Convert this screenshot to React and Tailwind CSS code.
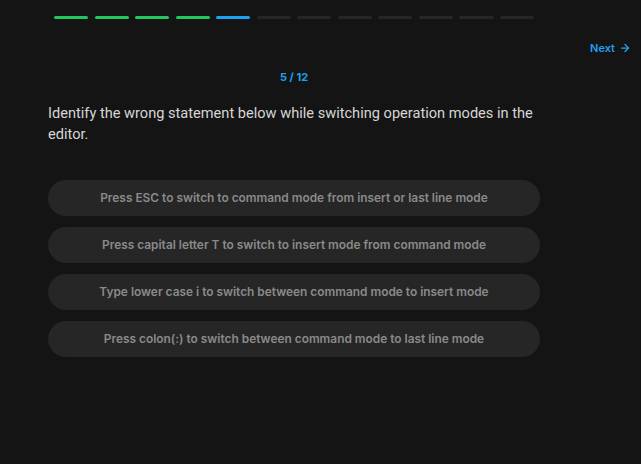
import { ArrowRight } from 'lucide-react'

const STEPS = 12
const CURRENT = 5

const OPTIONS = [
  'Press ESC to switch to command mode from insert or last line mode',
  'Press capital letter T to switch to insert mode from command mode',
  'Type lower case i to switch between command mode to insert mode',
  'Press colon(:) to switch between command mode to last line mode',
]

export default function App() {
  return (
    <div className="min-h-[464px] w-[641px] bg-[#141414] font-['Inter',sans-serif]">
      {/* progress */}
      <div className="flex gap-[6.5px] pl-[54px] pr-[107px] pt-4">
        {Array.from({ length: STEPS }).map((_, i) => (
          <div
            key={i}
            className={
              i < CURRENT - 1
                ? 'h-[3px] flex-1 rounded-full bg-[#22c55e]'
                : i === CURRENT - 1
                ? 'h-[3px] flex-1 rounded-full bg-[#1da1f2]'
                : 'h-[3px] flex-1 rounded-full bg-[#262626]'
            }
          />
        ))}
      </div>

      <div className="flex justify-end pr-[10px] pt-[21px]">
        <button className="flex items-center gap-1 text-[11px] font-semibold text-[#1da1f2]">
          Next <ArrowRight size={12} strokeWidth={2.5} />
        </button>
      </div>

      <div className="w-[492px] pl-12 box-content">
        <p className="mt-[12px] text-center text-[11px] font-bold text-[#1da1f2]">
          {CURRENT} / {STEPS}
        </p>

        <h1 className="mt-[18px] font-['Roboto',sans-serif] text-[14.6px] leading-[21px] text-[#d6d6d6]">
          Identify the wrong statement below while switching operation modes in the editor.
        </h1>

        <div className="mt-[35px] flex flex-col gap-[11px]">
          {OPTIONS.map(opt => (
            <button
              key={opt}
              className="h-[36px] w-full rounded-full bg-[#262626] text-center text-[11.9px] font-semibold text-[#8a8a8a]"
            >
              {opt}
            </button>
          ))}
        </div>
      </div>
    </div>
  )
}
